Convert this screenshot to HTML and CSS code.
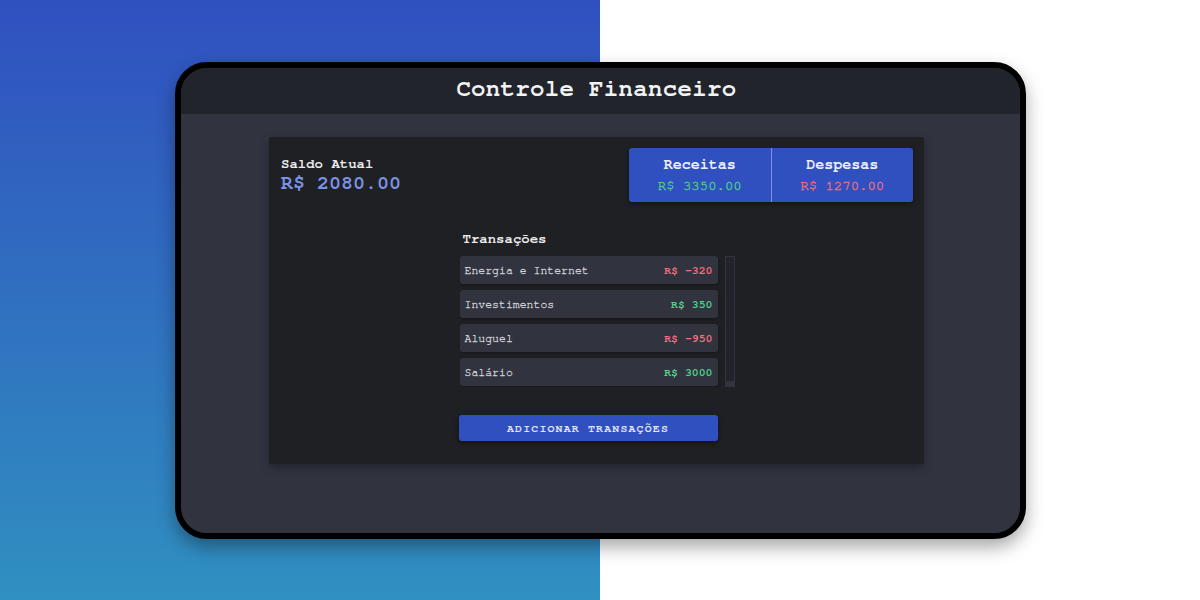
FILE: index.html
```html
<!DOCTYPE html>
<html lang="pt-BR">
<head>
<meta charset="utf-8">
<title>Controle Financeiro</title>
<link rel="stylesheet" href="styles.css">
</head>
<body>
  <div class="device">
    <header class="app-header">
      <h1 class="app-title">Controle Financeiro</h1>
    </header>
    <main class="app-main">
      <section class="card">
        <div class="top-row">
          <div class="balance">
            <h2 class="balance-label">Saldo Atual</h2>
            <div class="balance-value">R$ 2080.00</div>
          </div>
          <div class="summary">
            <div class="summary-cell">
              <h3 class="summary-title">Receitas</h3>
              <div class="summary-value income">R$ 3350.00</div>
            </div>
            <div class="summary-cell">
              <h3 class="summary-title">Despesas</h3>
              <div class="summary-value expense">R$ 1270.00</div>
            </div>
          </div>
        </div>
        <div class="transactions">
          <h2 class="transactions-title">Transações</h2>
          <div class="tx-scroll">
            <ul class="tx-list">
              <li class="tx-item"><span class="tx-name">Energia e Internet</span><span class="tx-amount expense">R$ -320</span></li>
              <li class="tx-item"><span class="tx-name">Investimentos</span><span class="tx-amount income">R$ 350</span></li>
              <li class="tx-item"><span class="tx-name">Aluguel</span><span class="tx-amount expense">R$ -950</span></li>
              <li class="tx-item"><span class="tx-name">Salário</span><span class="tx-amount income">R$ 3000</span></li>
            </ul>
            <div class="scrollbar" aria-hidden="true"><div class="scrollbar-thumb"></div></div>
          </div>
          <button class="add-btn" type="button">Adicionar Transações</button>
        </div>
      </section>
    </main>
  </div>
</body>
</html>
```
FILE: styles.css
```css
* { box-sizing: border-box; }

html, body {
  margin: 0;
  padding: 0;
}

body {
  width: 1200px;
  height: 600px;
  display: flex;
  align-items: center;
  justify-content: center;
  font-family: "FreeMono", "Liberation Mono", monospace;
  background:
    linear-gradient(to bottom, #3050c0, #3090c0) left top / 600px 100% no-repeat,
    #ffffff;
}

.device {
  width: 851px;
  height: 477px;
  margin-left: 1px;
  margin-top: 1px;
  border: 6px solid #000;
  border-radius: 32px;
  overflow: hidden;
  display: flex;
  flex-direction: column;
  background: #31333f;
  box-shadow: 0 8px 18px rgba(0, 0, 0, 0.35);
}

.app-header {
  height: 46px;
  flex: 0 0 46px;
  background: #21242b;
  display: flex;
  align-items: center;
  justify-content: center;
  padding-right: 8px;
  padding-bottom: 5px;
}

.app-title {
  margin: 0;
  color: #f2f2f2;
  font-size: 24px;
  letter-spacing: 0.35px;
  font-weight: bold;
  line-height: 1;
}

.app-main {
  flex: 1;
  padding: 23px 96px 0 88px;
}

.card {
  background: #1f2024;
  padding: 11px 11px 23px 12px;
  border-radius: 2px;
  box-shadow: 0 4px 10px rgba(0, 0, 0, 0.3);
}

.top-row {
  display: flex;
  justify-content: space-between;
  align-items: flex-start;
}

.balance {
  padding-top: 8px;
}

.balance-label {
  margin: 0;
  font-size: 14px;
  line-height: 17px;
  font-weight: bold;
  color: #ececec;
}

.balance-value {
  font-size: 20px;
  line-height: 20px;
  font-weight: bold;
  color: #7b93e4;
}

.summary {
  width: 284px;
  height: 54px;
  display: flex;
  background: #3050c0;
  border-radius: 3px;
  box-shadow: 0 2px 5px rgba(0, 0, 0, 0.4);
}

.summary-cell {
  flex: 1;
  display: flex;
  flex-direction: column;
  align-items: center;
  justify-content: center;
  gap: 3px;
  padding-top: 1px;
}

.summary-cell + .summary-cell {
  border-left: 1px solid #7d93e0;
}

.summary-title {
  margin: 0;
  font-size: 15px;
  line-height: 18px;
  font-weight: bold;
  color: #eef0f8;
}

.summary-value {
  font-size: 14px;
  line-height: 18px;
  -webkit-text-stroke: 0.35px currentColor;
}

.income { color: #4fd28a; }
.expense { color: #f0707e; }

.transactions {
  width: 275px;
  margin: 28px auto 0;
}

.transactions-title {
  margin: 0 0 8px 3px;
  font-size: 14px;
  line-height: 18px;
  font-weight: bold;
  color: #ececec;
}

.tx-scroll {
  height: 131px;
  display: flex;
  align-items: stretch;
  gap: 7px;
  overflow: hidden;
}

.tx-list {
  flex: 1;
  list-style: none;
  margin: 0;
  padding: 0;
}

.scrollbar {
  width: 10px;
  flex: 0 0 10px;
  background: #31333f;
  padding: 1px 1px 6px;
}

.scrollbar-thumb {
  height: 100%;
  background: #22242b;
}

.tx-item {
  height: 28px;
  margin-bottom: 6px;
  padding: 0 5px 0 5px;
  display: flex;
  align-items: center;
  justify-content: space-between;
  background: #31333f;
  border-radius: 3px;
  box-shadow: 0 1px 3px rgba(0, 0, 0, 0.35);
  font-size: 11.5px;
}

.tx-name {
  color: #cfd1d6;
  -webkit-text-stroke: 0.3px currentColor;
}

.tx-amount {
  font-weight: bold;
}

.add-btn {
  display: block;
  width: 259px;
  height: 26px;
  margin: 28px 0 0 -1px;
  border: none;
  border-radius: 3px;
  background: #3050c0;
  color: #e2e6f4;
  font-family: inherit;
  font-size: 11.5px;
  font-weight: bold;
  letter-spacing: 1.2px;
  text-transform: uppercase;
  box-shadow: 0 2px 5px rgba(0, 0, 0, 0.45);
  cursor: pointer;
}
```
